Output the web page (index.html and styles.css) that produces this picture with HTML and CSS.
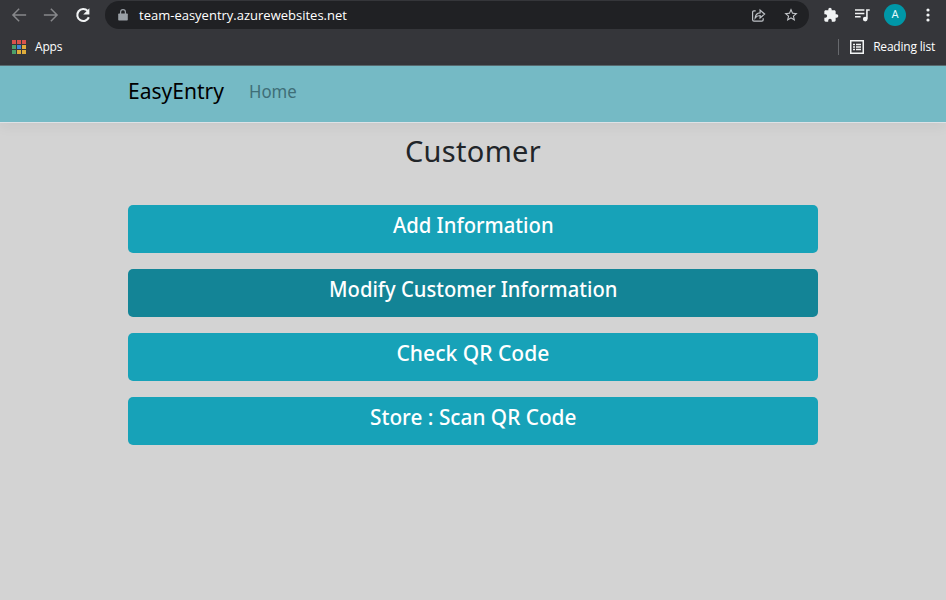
FILE: index.html
```html
<!DOCTYPE html>
<html lang="en">
<head>
<meta charset="utf-8">
<title>EasyEntry</title>
<link rel="stylesheet" href="styles.css">
</head>
<body>
<header class="browser">
  <div class="toolbar">
    <svg class="icon dim back" viewBox="0 0 24 24"><path d="M21.500 11H6.300l6.600-6.600L11.500 3l-9 9 9 9 1.400-1.400L6.300 13h15.200z"/></svg>
    <svg class="icon dim forward" viewBox="0 0 24 24"><path d="M12.500 3l-1.400 1.400 6.600 6.600H2.500v2h15.200l-6.600 6.600 1.400 1.400 9-9z"/></svg>
    <svg class="icon reload" viewBox="0 0 24 24"><path d="M18.200 6.500A8 8 0 1 0 19.800 15" fill="none" stroke="currentColor" stroke-width="2.800"/><path d="M20.500 3v8.200h-8.200z"/></svg>
    <div class="omnibox">
      <svg class="lock" viewBox="0 0 10 12"><path d="M1 4.500h8q.8 0 .8.8v5.400q0 .8-.8.8H1q-.8 0-.8-.8V5.300q0-.8.8-.8z"/><path d="M2.600 5V3.100a2.400 2.400 0 0 1 4.800 0V5" fill="none" stroke="currentColor" stroke-width="1.200"/></svg>
      <span class="url">team-easyentry.azurewebsites.net</span>
      <svg class="share" viewBox="0 0 16 16"><path d="M5 3H3.200Q1.700 3 1.700 4.500v8Q1.700 14 3.200 14h8.300q1.500 0 1.500-1.500V11M4.500 10.500C4.800 7 6.600 5.400 9.700 5.200V2.300L14.500 6.500 9.700 10.500V8C7.300 8 5.700 8.800 4.500 10.500z"/></svg>
      <svg class="star" viewBox="0 0 24 24"><path d="M22 9.240l-7.190-.62L12 2 9.190 8.630 2 9.240l5.460 4.730L5.820 21 12 17.270 18.180 21l-1.630-7.030L22 9.240zM12 15.400l-3.760 2.270 1-4.280-3.320-2.880 4.380-.38L12 6.100l1.710 4.040 4.380.38-3.320 2.880 1 4.280L12 15.400z"/></svg>
    </div>
    <svg class="icon puzzle" viewBox="0 0 24 24"><path d="M20.500 11H19V7c0-1.100-.9-2-2-2h-4V3.500a2.500 2.500 0 0 0-5 0V5H4c-1.100 0-2 .9-2 2v3.800h1.500a2.700 2.700 0 0 1 0 5.400H2V20c0 1.100.9 2 2 2h3.800v-1.500a2.700 2.700 0 0 1 5.400 0V22H17c1.100 0 2-.9 2-2v-4h1.500a2.500 2.500 0 0 0 0-5z"/></svg>
    <svg class="icon media" viewBox="0 0 18 16"><path d="M1 2.200h10M1 5.800h10M1 9.400h6" fill="none" stroke="currentColor" stroke-width="1.600"/><path d="M13.700 11.500V2.200h3" fill="none" stroke="currentColor" stroke-width="1.700"/><circle cx="11.900" cy="11.800" r="2.500"/></svg>
    <span class="avatar">A</span>
    <svg class="dots" viewBox="0 0 4 14"><circle cx="2" cy="2" r="1.600"/><circle cx="2" cy="7" r="1.600"/><circle cx="2" cy="12" r="1.600"/></svg>
  </div>
  <div class="bookmarks">
    <span class="apps"><i class="r"></i><i class="r"></i><i class="r"></i><i class="g"></i><i class="b"></i><i class="y"></i><i class="g"></i><i class="y"></i><i class="y"></i></span>
    <span class="label apps-label">Apps</span>
    <span class="divider"></span>
    <svg class="list" viewBox="0 0 14 14"><path d="M.75.75h12.500v12.500H.75z"/><path d="M3 4.500h2M3 7h2M3 9.500h2M6 4.500h5M6 7h5M6 9.500h5"/></svg>
    <span class="label reading">Reading list</span>
  </div>
</header>
<nav class="navbar">
  <a class="brand">EasyEntry</a>
  <a class="nav-link">Home</a>
</nav>
<main class="container">
  <h1>Customer</h1>
  <div class="actions">
    <a class="btn"><span class="add">Add Information</span></a>
    <a class="btn active"><span class="modify">Modify Customer Information</span></a>
    <a class="btn"><span class="check">Check QR Code</span></a>
    <a class="btn"><span class="store">Store : Scan QR Code</span></a>
  </div>
</main>
</body>
</html>
```
FILE: styles.css
```css
* { box-sizing: border-box; }
body {
  margin: 0;
  height: 600px;
  overflow: hidden;
  background: #d3d3d3;
  font-family: "Noto Sans", sans-serif;
  color: #212529;
}
svg { fill: currentColor; display: block; flex: none; }
.browser { height: 66px; background: #35363a; color: #f1f3f4; border-bottom: 1px solid #596b70; }
.toolbar { height: 30px; display: flex; align-items: center; padding-left: 10px; }
.icon { width: 18px; height: 18px; }
.dim { color: #87888b; }
.forward { margin-left: 14px; }
.reload { margin-left: 14px; }
.omnibox {
  width: 704px; height: 28px; margin-left: 13px; padding-left: 13px;
  border-radius: 14px; background: #202124;
  display: flex; align-items: center; flex: none;
}
.lock { width: 10px; height: 12px; color: #9aa0a6; }
.url { margin-left: 11px; width: 612px; font: 13px/18px "Open Sans", sans-serif; color: #fff; white-space: nowrap; }
.share { width: 15px; height: 15px; fill: none; stroke: #bdc1c6; stroke-width: 1.3; }
.star { width: 16px; height: 16px; margin-left: 17px; color: #c6c9cd; }
.puzzle { width: 16px; height: 16px; margin-left: 14px; }
.media { width: 17px; height: 15px; margin-left: 15px; }
.avatar {
  width: 22px; height: 22px; margin-left: 13px; border-radius: 50%; flex: none;
  background: #0097a7; color: #e8fbfd; font: 11px/22px Roboto, sans-serif; text-align: center;
}
.dots { width: 4px; height: 14px; margin-left: 20px; }
.bookmarks { height: 34px; display: flex; align-items: center; padding: 0 11px 0 12px; }
.apps { display: grid; grid-template-columns: repeat(3, 3.5px); grid-auto-rows: 3.5px; gap: 1.5px; }
.r { background: #d9534b; }
.g { background: #4ba06a; }
.b { background: #3f87d8; }
.y { background: #e0ad3b; }
.label { font: 12px/16px "Open Sans", sans-serif; color: #fff; white-space: nowrap; }
.apps-label { margin-left: 9.5px; letter-spacing: -.2px; }
.divider { width: 1px; height: 16px; margin-left: auto; background: #67696d; }
.list { width: 14px; height: 14px; margin-left: 11px; fill: none; stroke: currentColor; stroke-width: 1.5; }
.reading { margin-left: 9px; letter-spacing: -.2px; }
.navbar {
  height: 57px; padding-left: 128px; display: flex; align-items: flex-start;
  background: #75bac5; border-bottom: 1px solid #dee2e6;
  box-shadow: 0 4px 12px rgba(0, 0, 0, .05);
}
.brand { width: 121px; padding-top: 8px; font-size: 22px; line-height: 32px; color: #000; transform: scaleX(.955); transform-origin: left; }
.nav-link { padding-top: 12px; font-size: 17.5px; line-height: 26px; color: #3f6e77; transform: scaleX(.96); transform-origin: left; }
.container { width: 690px; margin: 0 auto; }
h1 { margin: 0; padding-top: 9px; text-align: center; font-size: 29px; font-weight: 400; line-height: 38px; letter-spacing: .3px; }
.actions { display: grid; gap: 16px; margin-top: 35px; }
.btn { height: 48px; padding-top: 3px; border-radius: 5px; background: #17a2b8; color: #fff; text-align: center; font-size: 22px; line-height: 32px; font-weight: 500; }
.btn span { display: inline-block; }
.add { transform: scaleX(.92); }
.modify { transform: scaleX(.917); }
.check { transform: scaleX(.956); }
.store { transform: scaleX(.945); }
.active { background: #138496; }
```
